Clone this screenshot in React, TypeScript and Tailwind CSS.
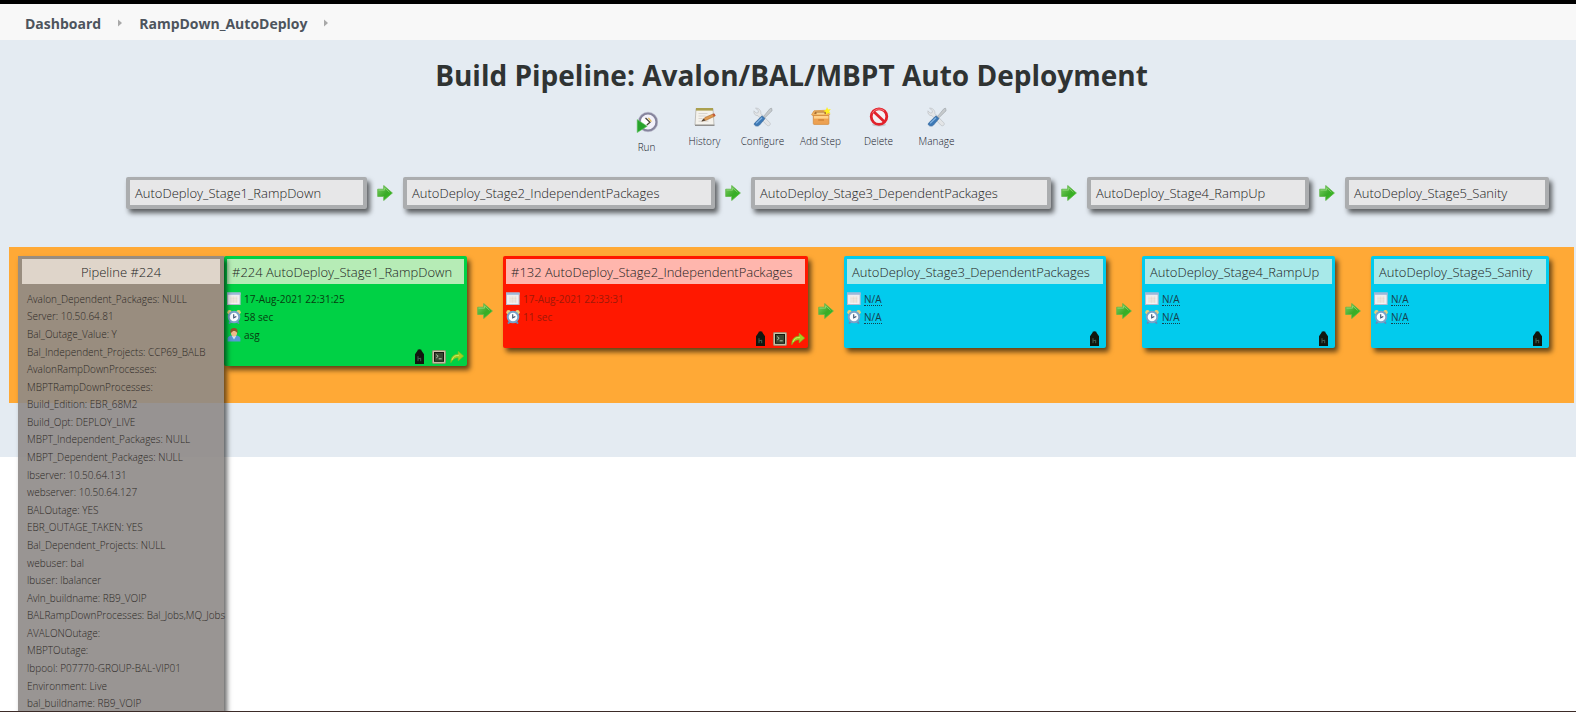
import React from "react";

const Arrow = () => (
  <svg viewBox="0 0 16 16" className="size-4 justify-self-center" aria-hidden="true">
    <defs>
      <linearGradient id="arrowFill" x1="0" y1="0" x2="1" y2="1">
        <stop offset="0" stopColor="#7ccf63" />
        <stop offset="0.55" stopColor="#3aab27" />
        <stop offset="1" stopColor="#2fc41c" />
      </linearGradient>
    </defs>
    <path d="M0.7 4.2h6V0.5L15.4 8l-8.7 7.5v-4h-6z" fill="url(#arrowFill)" stroke="#62b64b" strokeWidth="0.8" />
    <path d="M1.5 5.2h6V2.8l5 4.4" fill="none" stroke="#98dd83" strokeWidth="0.7" />
  </svg>
);

const RunIcon = () => (
  <svg viewBox="0 0 22 22" className="size-[22px]" aria-hidden="true">
    <circle cx="12" cy="11" r="8.6" fill="#f2f1fa" stroke="#85849c" strokeWidth="2.4" />
    <circle cx="12" cy="11" r="9.8" fill="none" stroke="#b5b4c8" strokeWidth="0.6" />
    <path d="M6 6.5l6 3 1.5 3-7.5 4z" fill="#fff" />
    <path d="M9.5 7l4.5 4.3-3.2 2.7" fill="none" stroke="#4c4a3a" strokeWidth="1.3" />
    <path d="M12.4 6.8l3 3.8" stroke="#e4b94e" strokeWidth="1.2" />
    <path d="M1.2 8.6l10 6.6-10 6.4z" fill="#27a32b" stroke="#65c665" strokeWidth="0.6" />
  </svg>
);

const HistoryIcon = () => (
  <svg viewBox="0 0 22 20" className="h-5 w-[22px]" aria-hidden="true">
    <path d="M2 1.5h17l1 16.5H1z" fill="#f4f2ec" stroke="#b5b3ac" strokeWidth="0.8" />
    <path d="M2 1h17v2.6H2z" fill="#aaa04f" />
    <path d="M1 18.3h19.5" stroke="#888786" strokeWidth="1.2" />
    <path d="M4.5 6.5h9M4.5 9h7M4.5 11.5h4M4.5 14.2h10" stroke="#cbc9c4" strokeWidth="0.7" />
    <path d="M8 14l3-3.6L19.6 6.8l1.6 2.1-8.7 4.2z" fill="#df9a50" stroke="#a9682c" strokeWidth="0.6" />
    <path d="M7.2 14.6l2.5-3 1.8 2z" fill="#53483e" />
    <path d="M18.4 7.3l2-.9 1.1 2-1.8.9z" fill="#c1563b" />
  </svg>
);

const ToolsIcon = () => (
  <svg viewBox="0 0 20 20" className="size-5" aria-hidden="true">
    <path
      d="M2.5 1.2l3 2.6-.4 1.9-1.9.4L1 3.8c-.6 2.8 1 5 4 4.9l8.9 9.5c1.9 1.6 4.3-.4 3-2.4L7.8 6.5c.5-2.9-2-5.7-5.3-5.3z"
      fill="#e3e5e7"
      stroke="#bcc0c4"
      strokeWidth="0.7"
    />
    <path d="M18.6 1.2l-1.8.6-6.2 7.6 1.4 1.3 7.1-7z" fill="#c6cacd" stroke="#999fa5" strokeWidth="0.6" />
    <path d="M9 8.8l3 2.8-5.5 6.5c-1.6 1.9-6.2 1-5.1-1.8z" fill="#3c78b5" stroke="#2d6197" strokeWidth="0.6" />
    <path d="M9 10.8l-5.8 5.6" stroke="#86b5e2" strokeWidth="1.2" />
  </svg>
);

const PackageIcon = () => (
  <svg viewBox="0 0 20 20" className="size-5" aria-hidden="true">
    <path d="M3 3.8l13-.6 2.6 4.4-1 1H2L.6 7.8z" fill="#f0b564" stroke="#d58c37" strokeWidth="0.7" />
    <path d="M4 4.8l11-.3 1 2.5H3.2z" fill="#a96e31" />
    <path d="M5.5 5.5h8v2h-8z" fill="#f9d28c" />
    <path d="M2.3 8.4h15.6v8.2q0 .8-.8.8H3.1q-.8 0-.8-.8z" fill="#eda152" stroke="#d28637" strokeWidth="0.7" />
    <path d="M3 9h14.3v2.6H3z" fill="#ffd28c" />
    <path d="M7.2 12.3h5.8v1.4H7.2z" fill="#cf8136" />
    <path d="M16 0l1.2 2.4 2.6-.3-1.6 2.1 1.3 2.3-2.6-.5-1.9 1.7-.2-2.6-2.4-1.1 2.4-1.1z" fill="#fff11f" />
  </svg>
);

const DeleteIcon = () => (
  <svg viewBox="0 0 20 20" className="size-5" aria-hidden="true">
    <ellipse cx="10" cy="17.8" rx="7" ry="1.6" fill="#c3c8ce" />
    <circle cx="10" cy="9.6" r="7.8" fill="#f3f0f3" stroke="#e1222b" strokeWidth="2.8" />
    <path d="M4.6 4.4l10.8 10.4" stroke="#e1222b" strokeWidth="2.8" />
    <path d="M3.2 6.2a7.7 7.7 0 0 1 12-2.3" fill="none" stroke="#f88087" strokeWidth="0.9" />
  </svg>
);

const CalendarIcon = () => (
  <svg viewBox="0 0 14 14" className="size-3.5" aria-hidden="true">
    <rect x="0.5" y="1" width="12.6" height="11.5" fill="#eeedf0" stroke="#b9bccd" />
    <path d="M0 .5h13.6v2.3H0z" fill="#9db7da" />
    <path d="M3.4 4.6h7v6.2h-7z" fill="#e2d5ca" />
    <path d="M2.5 5.2h9M2.5 7.1h9M2.5 9h9M2.5 11h9M5 4v8M8 4v8" stroke="#fff" strokeWidth="0.4" />
  </svg>
);

const ClockIcon = () => (
  <svg viewBox="0 0 14 14" className="size-3.5" aria-hidden="true">
    <path d="M2 13.6l2.2-2.4M12 13.6l-2.2-2.4" stroke="#5c8dbb" strokeWidth="1.9" />
    <circle cx="2.5" cy="2.3" r="2.2" fill="#e6cf7c" />
    <circle cx="11.5" cy="2.3" r="2.2" fill="#e6cf7c" />
    <circle cx="7" cy="7" r="5.3" fill="#fafcff" stroke="#78a3c9" strokeWidth="2" />
    <path d="M6.7 4.2v3.6l2.6-1.3" fill="none" stroke="#3b5270" strokeWidth="1.1" />
  </svg>
);

const UserIcon = () => (
  <svg viewBox="0 0 14 14" className="size-3.5" aria-hidden="true">
    <path d="M.6 13.6V10.5q.4-2.5 4-2.9h4.8q3.6.4 4 2.9v3.1z" fill="#5899d7" />
    <path d="M4.8 8l2.2 3.6L9.2 8z" fill="#cfe4f7" />
    <ellipse cx="7" cy="4.8" rx="3.1" ry="3.7" fill="#f0bd8b" />
    <path d="M3.6 5.2C2.8.9 5 .1 7 .1s4.2.8 3.4 5.1C9.3 3.3 8 2.9 6.2 3z" fill="#8b5629" />
  </svg>
);

const BottleIcon = () => (
  <svg viewBox="0 0 9 15" className="h-[15px] w-[9px]" aria-hidden="true">
    <path d="M0 5.2L2.6 1.6V.8Q4.5-.4 6.4.8v.8L9 5.2V15H0z" fill="#11160f" />
    <path d="M3 7.2v5M3.2 9.8l2.5-.6v3" fill="none" stroke="#527264" strokeWidth="0.8" />
  </svg>
);

const TerminalIcon = () => (
  <svg viewBox="0 0 14 14" className="size-3.5" aria-hidden="true">
    <rect x="0.4" y="0.4" width="13.2" height="13" rx="1" fill="#c9c1a8" stroke="#948a70" strokeWidth="0.8" />
    <rect x="2.5" y="2.5" width="9" height="8.8" fill="#3a4732" stroke="#15190f" />
    <path d="M4.2 4.6l2 1.7-2 1.7M6.7 8.8h3" fill="none" stroke="#d3e1c7" strokeWidth="0.8" />
  </svg>
);

const RerunIcon = () => (
  <svg viewBox="0 0 14 14" className="size-3.5" aria-hidden="true">
    <path d="M.8 12.8C.6 7 3.6 4.2 8.2 4.2V1.2l5.5 4.9-5.5 4.8V7.8C5.2 7.6 3 9 .8 12.8z" fill="#a2cf22" stroke="#76bd26" strokeWidth="0.6" />
    <path d="M2 10c1-3.4 3.4-4.8 7-4.7" fill="none" stroke="#dbf06c" strokeWidth="0.8" />
  </svg>
);

const Crumb = () => (
  <svg viewBox="0 0 4 8" className="h-2 w-1" aria-hidden="true">
    <path d="M0 0.5L4 4 0 7.5z" fill="#a9a9a9" />
  </svg>
);

const actions: { label: string; icon: React.ReactNode }[] = [
  { label: "Run", icon: <RunIcon /> },
  { label: "History", icon: <HistoryIcon /> },
  { label: "Configure", icon: <ToolsIcon /> },
  { label: "Add Step", icon: <PackageIcon /> },
  { label: "Delete", icon: <DeleteIcon /> },
  { label: "Manage", icon: <ToolsIcon /> },
];

const stages = [
  "AutoDeploy_Stage1_RampDown",
  "AutoDeploy_Stage2_IndependentPackages",
  "AutoDeploy_Stage3_DependentPackages",
  "AutoDeploy_Stage4_RampUp",
  "AutoDeploy_Stage5_Sanity",
];

type Build = {
  title: string;
  color: string;
  head: string;
  text: string;
  date?: string;
  duration?: string;
  user?: string;
};

const waiting = { color: "bg-[#02cbed]", head: "bg-[#a8e9e9]", text: "text-[#163f4c]" };

const builds: Build[] = [
  {
    title: "#224 AutoDeploy_Stage1_RampDown",
    color: "bg-[#00d145]",
    head: "bg-[#b6ecb6]",
    text: "text-[#073d10]",
    date: "17-Aug-2021 22:31:25",
    duration: "58 sec",
    user: "asg",
  },
  {
    title: "#132 AutoDeploy_Stage2_IndependentPackages",
    color: "bg-[#ff1800]",
    head: "bg-[#ffb6ad]",
    text: "text-[#a01808]",
    date: "17-Aug-2021 22:33:31",
    duration: "11 sec",
  },
  { title: stages[2], ...waiting },
  { title: stages[3], ...waiting },
  { title: stages[4], ...waiting },
];

const parameters = [
  "Avalon_Dependent_Packages: NULL",
  "Server: 10.50.64.81",
  "Bal_Outage_Value: Y",
  "Bal_Independent_Projects: CCP69_BALB",
  "AvalonRampDownProcesses:",
  "MBPTRampDownProcesses:",
  "Build_Edition: EBR_68M2",
  "Build_Opt: DEPLOY_LIVE",
  "MBPT_Independent_Packages: NULL",
  "MBPT_Dependent_Packages: NULL",
  "lbserver: 10.50.64.131",
  "webserver: 10.50.64.127",
  "BALOutage: YES",
  "EBR_OUTAGE_TAKEN: YES",
  "Bal_Dependent_Projects: NULL",
  "webuser: bal",
  "lbuser: lbalancer",
  "Avln_buildname: RB9_VOIP",
  "BALRampDownProcesses: Bal_Jobs,MQ_Jobs",
  "AVALONOutage:",
  "MBPTOutage:",
  "lbpool: P07770-GROUP-BAL-VIP01",
  "Environment: Live",
  "bal_buildname: RB9_VOIP",
];

function Value({ children }: { children?: string }) {
  return children ? <span>{children}</span> : <abbr className="border-b border-dotted border-current leading-3 no-underline">N/A</abbr>;
}

function BuildCard({ build }: { build: Build }) {
  return (
    <article className={`flex flex-col self-start rounded-xs px-[3px] pt-[3px] shadow-[3px_4px_5px_rgba(0,0,0,0.6)] ${build.color}`}>
      <h3 className={`h-[25px] overflow-hidden pl-[5px] text-[13px] leading-[26px] font-light whitespace-nowrap text-[#222] ${build.head}`}>{build.title}</h3>
      <ul className={`flex flex-col pt-1.5 text-[10px] ${build.text}`}>
        <li className="flex h-[18px] items-center gap-[3px]"><CalendarIcon /><Value>{build.date}</Value></li>
        <li className="flex h-[18px] items-center gap-[3px]"><ClockIcon /><Value>{build.duration}</Value></li>
        {build.user && <li className="flex h-[18px] items-center gap-[3px]"><UserIcon /><span>{build.user}</span></li>}
      </ul>
      <div className="flex h-[22px] items-end justify-end gap-1 pb-0.5">
        <button type="button" aria-label="Details" className="mr-1"><BottleIcon /></button>
        {build.date && (
          <>
            <button type="button" aria-label="Console"><TerminalIcon /></button>
            <button type="button" aria-label="Run again"><RerunIcon /></button>
          </>
        )}
      </div>
    </article>
  );
}

export default function App() {
  return (
    <div className="flex h-screen min-w-[1200px] flex-col overflow-hidden border-t-4 border-b border-t-black border-b-[#3b2b28] bg-white font-['Open_Sans','Noto_Sans',sans-serif]">
      <nav className="flex h-9 shrink-0 items-center gap-[17px] bg-[#f8f8f8] px-[25px] pt-0.5 text-[14px] font-bold text-[#4d545d]">
        <a href="#dashboard">Dashboard</a>
        <Crumb />
        <a href="#rampdown">RampDown_AutoDeploy</a>
        <Crumb />
      </nav>
      <main className="shrink-0 bg-[#e4ebf2] pb-[54px]">
        <header className="pt-[15px] pl-[7px]">
          <h1 className="text-center text-[28px] leading-10 font-bold text-[#2f3333]">Build Pipeline: Avalon/BAL/MBPT Auto Deployment</h1>
          <div className="mt-3 flex h-[69px] justify-center">
            {actions.map((action) => (
              <button key={action.label} type="button" className="flex w-[58px] flex-col items-center gap-1.5 self-start text-[10px] leading-4 font-light whitespace-nowrap text-[#16202a] first:pt-1">
                {action.icon}
                {action.label}
              </button>
            ))}
          </div>
        </header>
        <section className="mr-[27px] ml-[126px] grid grid-cols-[241fr_36px_312fr_36px_300fr_36px_222fr_36px_204fr] items-center pt-[1px]">
          {stages.map((stage, i) => (
            <React.Fragment key={stage}>
              {i > 0 && <Arrow />}
              <div className="h-8 rounded-xs border-x-4 border-t-[3px] border-b-4 border-[#abadaf] bg-[#e7e7e8] pl-[5px] text-[13px] leading-[27px] font-light whitespace-nowrap text-[#222] shadow-[3px_4px_5px_rgba(0,0,0,0.6)]">
                {stage}
              </div>
            </React.Fragment>
          ))}
        </section>
        <section className="relative mt-[38px] mr-0.5 ml-[9px] h-[156px] bg-[#ffa936] pt-[9px] pr-[25px] pl-[215px]">
          <div className="grid grid-cols-[243fr_36px_305fr_36px_262fr_36px_193fr_36px_178fr] items-start">
            {builds.map((build, i) => (
              <React.Fragment key={build.title}>
                {i > 0 && <div className="flex h-[110px] items-center justify-center"><Arrow /></div>}
                <BuildCard build={build} />
              </React.Fragment>
            ))}
          </div>
          <aside className="absolute top-[9px] left-[9px] flex h-[calc(100vh-256px)] min-h-[400px] w-[206px] flex-col bg-[#8e8a87]/90 pt-[3px] pr-1 pl-1 shadow-[3px_4px_5px_rgba(0,0,0,0.6)]">
            <h2 className="h-[25px] shrink-0 bg-[#dfd5ca] text-center text-[13px] leading-[26px] font-light text-[#222]">Pipeline #224</h2>
            <ul className="mt-1.5 grid flex-1 auto-rows-fr items-center pl-[5px] text-[10px] leading-4 font-light whitespace-nowrap text-[#2d2926]">
              {parameters.map((parameter) => (
                <li key={parameter}>{parameter}</li>
              ))}
            </ul>
          </aside>
        </section>
      </main>
    </div>
  );
}
